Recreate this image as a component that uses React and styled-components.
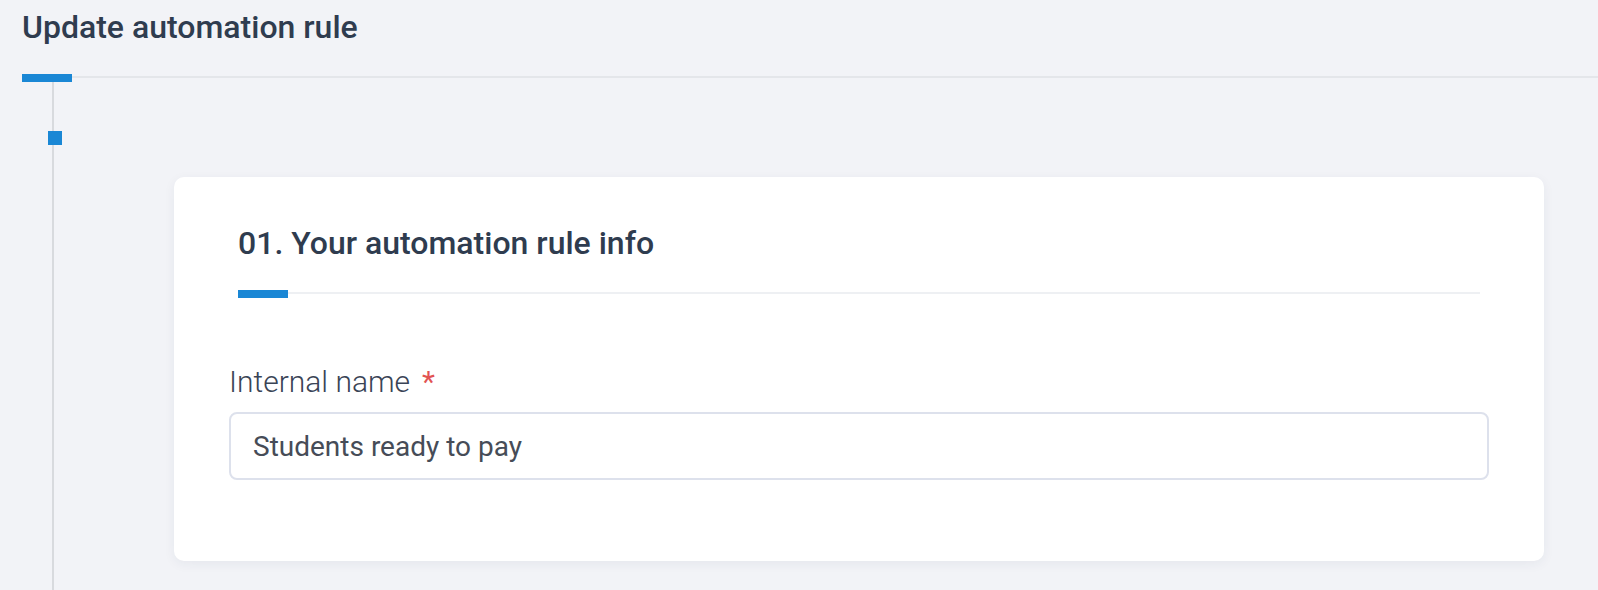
import React from "react";
import styled, { createGlobalStyle } from "styled-components";

const Global = createGlobalStyle`
  html, body { margin: 0; padding: 0; }
  body {
    background: #f2f3f7;
    font-family: Roboto, "Liberation Sans", sans-serif;
    -webkit-font-smoothing: antialiased;
  }
  * { box-sizing: border-box; }
`;

const Page = styled.div`
  min-height: 590px;
  height: 100vh;
  display: flex;
  flex-direction: column;
  padding-left: 22px;
`;

const Heading = styled.h1`
  margin: 0;
  font-size: 32px;
  font-weight: 500;
  line-height: 38px;
  color: #2f3c4f;
`;

const PageHeading = styled(Heading)`
  padding-top: 8px;
`;

const Divider = styled.div`
  display: flex;
  align-items: flex-start;
  margin-top: ${(p) => p.$gap}px;
`;

const DividerBar = styled.div`
  width: 50px;
  height: 8px;
  background: #1a87d5;
  flex: none;
`;

const DividerLine = styled.div`
  flex: 1;
  height: 2px;
  margin-top: 2px;
  background: ${(p) => p.$color};
`;

const Body = styled.div`
  flex: 1;
  display: flex;
  align-items: flex-start;
`;

const Rail = styled.div`
  position: relative;
  align-self: stretch;
  width: 2px;
  margin-left: 30px;
  background: #d8dade;
  flex: none;
`;

const RailNode = styled.div`
  position: absolute;
  left: -4px;
  top: 49px;
  width: 14px;
  height: 14px;
  background: #1a87d5;
`;

const Card = styled.section`
  flex: 1;
  margin: 95px 54px 0 120px;
  background: #ffffff;
  border-radius: 10px;
  box-shadow: 0 3px 12px rgba(40, 50, 90, 0.06);
  padding: 47px 55px 81px;
`;

const CardHeader = styled.div`
  margin: 0 9px;
`;

const Label = styled.label`
  display: block;
  margin-top: 66px;
  font-size: 30px;
  font-weight: 300;
  line-height: 1.172;
  color: #3a4456;
`;

const Required = styled.span`
  color: #e25353;
  font-weight: 400;
  margin-left: 12px;
`;

const Input = styled.input`
  display: block;
  width: 100%;
  margin-top: 13px;
  height: 68px;
  padding: 0 22px;
  border: 2px solid #dde1ec;
  border-radius: 8px;
  background: #fff;
  font-family: Roboto, "Liberation Sans", sans-serif;
  font-size: 28px;
  font-weight: 400;
  color: #464c57;
  outline: none;
`;

export default function App() {
  return (
    <>
      <Global />
      <Page>
        <PageHeading>Update automation rule</PageHeading>
        <Divider $gap={28}>
          <DividerBar />
          <DividerLine $color="#e4e6ea" />
        </Divider>
        <Body>
          <Rail>
            <RailNode />
          </Rail>
          <Card>
            <CardHeader>
              <Heading as="h2">01. Your automation rule info</Heading>
              <Divider $gap={28}>
                <DividerBar />
                <DividerLine $color="#eef0f3" />
              </Divider>
            </CardHeader>
            <Label htmlFor="internal-name">
              Internal name<Required>*</Required>
            </Label>
            <Input id="internal-name" defaultValue="Students ready to pay" />
          </Card>
        </Body>
      </Page>
    </>
  );
}
